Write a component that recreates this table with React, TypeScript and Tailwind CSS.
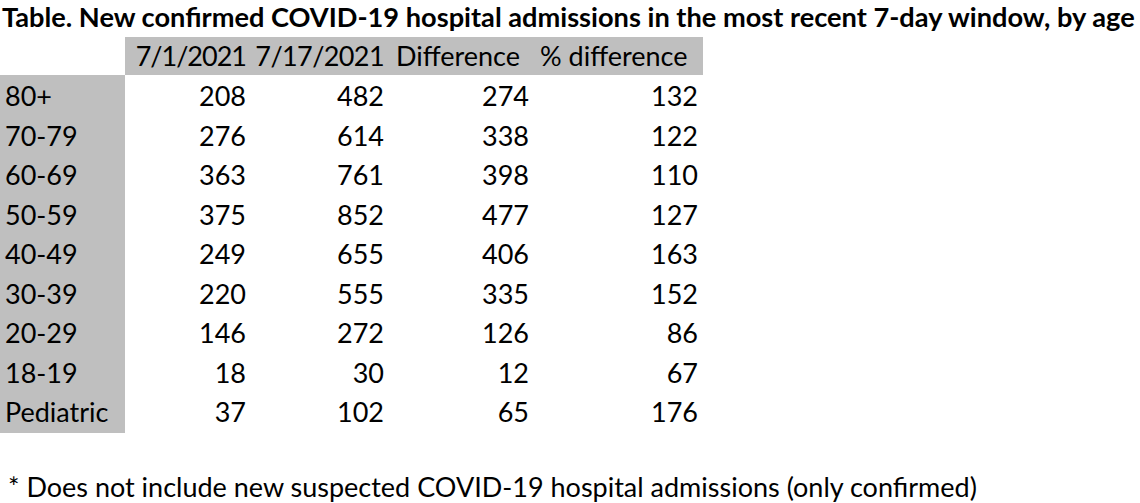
const rows: [string, number, number, number, number][] = [
  ["80+", 208, 482, 274, 132],
  ["70-79", 276, 614, 338, 122],
  ["60-69", 363, 761, 398, 110],
  ["50-59", 375, 852, 477, 127],
  ["40-49", 249, 655, 406, 163],
  ["30-39", 220, 555, 335, 152],
  ["20-29", 146, 272, 126, 86],
  ["18-19", 18, 30, 12, 67],
  ["Pediatric", 37, 102, 65, 176],
];

const cols = "grid grid-cols-[125px_126px_138px_145px_169px] w-[703px]";

export default function App() {
  return (
    <div className="w-[1140px] h-[503px] bg-white text-black overflow-hidden font-['Lato','Liberation_Sans',sans-serif]">
      {/* Title */}
      <div className="h-[37px] pl-[2px] pt-[1px] text-[27.2px] leading-[32px] font-bold whitespace-nowrap">
        Table. New confirmed COVID-19 hospital admissions in the most recent 7-day window, by age
      </div>

      {/* Table */}
      <div className="text-[27px]">
        <div className={`${cols} h-[38px] leading-[38px]`}>
          <div className="bg-white" />
          <div className="bg-[#bfbfbf] text-right pr-[5px] tracking-[-1px]">7/1/2021</div>
          <div className="bg-[#bfbfbf] text-right pr-[5px] tracking-[-0.6px]">7/17/2021</div>
          <div className="bg-[#bfbfbf] pl-[7px] whitespace-nowrap">Difference</div>
          <div className="bg-[#bfbfbf] pl-[6px] whitespace-nowrap">% difference</div>
        </div>
        {rows.map(([age, a, b, d, p]) => (
          <div key={age} className={`${cols} h-[39.5px] leading-[42px]`}>
            <div className="bg-[#bfbfbf] pl-[5px]">{age}</div>
            <div className="text-right pr-[5px]">{a}</div>
            <div className="text-right pr-[5px]">{b}</div>
            <div className="text-right pr-[5px]">{d}</div>
            <div className="text-right pr-[5px]">{p}</div>
          </div>
        ))}
      </div>

      {/* Footnote */}
      <div className="mt-[43px] pl-[8px] text-[27px] leading-[26px] whitespace-nowrap">
        * Does not include new suspected COVID-19 hospital admissions (only confirmed)
      </div>
    </div>
  );
}
